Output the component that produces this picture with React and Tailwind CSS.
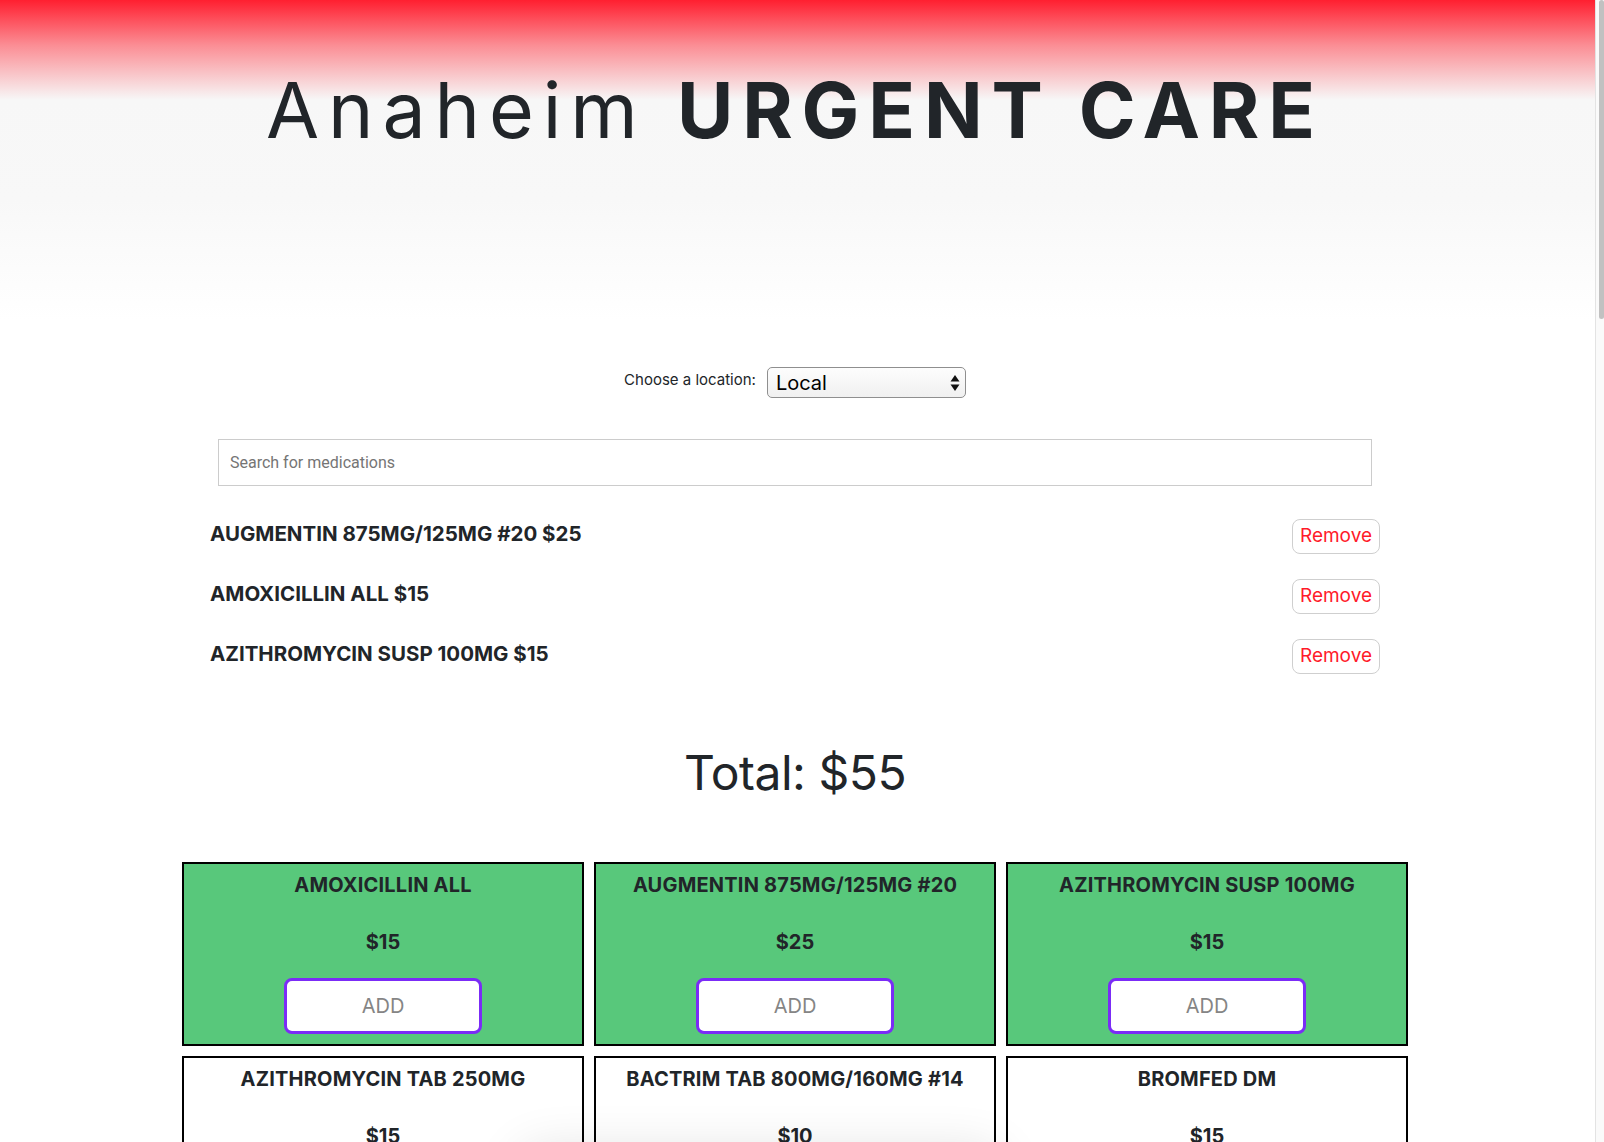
import React from "react";

const cartItems = [
  { name: "AUGMENTIN 875MG/125MG #20", price: 25 },
  { name: "AMOXICILLIN ALL", price: 15 },
  { name: "AZITHROMYCIN SUSP 100MG", price: 15 },
];

const meds = [
  { name: "AMOXICILLIN ALL", price: 15, selected: true },
  { name: "AUGMENTIN 875MG/125MG #20", price: 25, selected: true },
  { name: "AZITHROMYCIN SUSP 100MG", price: 15, selected: true },
  { name: "AZITHROMYCIN TAB 250MG", price: 15, selected: false },
  { name: "BACTRIM TAB 800MG/160MG #14", price: 10, selected: false },
  { name: "BROMFED DM", price: 15, selected: false },
];

function MedCard({ med }) {
  return (
    <div
      className={
        "h-[184px] border-2 border-black flex flex-col items-center pt-[11px] " +
        (med.selected ? "bg-[#58c87b]" : "bg-white")
      }
    >
      <div className="text-[20px] leading-none font-bold tracking-[0.01em] text-[#212529]">{med.name}</div>
      <div className="mt-[37px] text-[20px] leading-none font-bold text-[#212529]">${med.price}</div>
      <button className="mt-[26px] w-[198px] h-[56px] shrink-0 border-[3px] border-[#7b2cf6] rounded-[8px] bg-white text-[20px] text-[#858585]">
        ADD
      </button>
    </div>
  );
}

export default function App() {
  return (
    <div
      className="h-[1142px] overflow-hidden flex items-start bg-white relative text-[#212529]"
      style={{ fontFamily: "Inter, 'Noto Sans', sans-serif" }}
    >
      <div className="w-[1595px] shrink-0">
        <header className="h-[320px] pt-[72px] pr-[5px] text-center bg-[linear-gradient(to_bottom,#ff1f30_0px,#fb8d94_45px,#f7f7f7_100px,#f8f8f8_200px,#ffffff_320px)]">
          <h1 className="text-[77px] leading-none tracking-[0.115em] text-[#212529]">
            <span className="font-normal">Anaheim</span> <span className="font-bold">URGENT CARE</span>
          </h1>
        </header>

        <div className="pr-[5px]">
          <div className="mt-[47px] flex justify-center items-center gap-[11px]">
            <span className="text-[15px] text-[#212529] -mt-[4px]">Choose a location:</span>
            <div className="w-[199px] h-[31px] border border-[#8f8f8f] rounded-[5px] bg-[linear-gradient(to_bottom,#fdfdfd,#f0f0f0)] flex items-center justify-between pl-[8px] pr-[5px]">
              <span className="text-[20px] text-black leading-none">Local</span>
              <svg width="10" height="20" viewBox="0 0 10 20">
                <path d="M5 2 L9.5 8.5 L0.5 8.5 Z" fill="#111" />
                <path d="M5 18 L9.5 11.5 L0.5 11.5 Z" fill="#111" />
              </svg>
            </div>
          </div>

          <div className="mt-[41px] mx-auto w-[1154px] h-[47px] border border-[#cccccc] bg-white flex items-center px-[11px]">
            <span className="text-[16px] text-[#757575]" style={{ fontFamily: "Roboto, sans-serif" }}>
              Search for medications
            </span>
          </div>

          <div className="mt-[33px] mx-auto w-[1170px] flex flex-col gap-[25px]">
            {cartItems.map((it) => (
              <div key={it.name} className="flex justify-between items-center h-[35px]">
                <span className="text-[20.5px] font-bold leading-none -mt-[4px]">
                  {it.name} ${it.price}
                </span>
                <button className="w-[88px] h-[35px] border border-[#cfcfcf] rounded-[8px] bg-white text-[19px] text-[#ff1a2a]">
                  Remove
                </button>
              </div>
            ))}
          </div>

          <div className="mt-[75px] text-center text-[48px] leading-none font-normal tracking-[-0.01em]">Total: $55</div>

          <div className="mt-[65px] mx-auto w-[1226px] grid grid-cols-3 gap-[10px]">
            {meds.map((m) => (
              <MedCard key={m.name} med={m} />
            ))}
          </div>
        </div>
      </div>

      <div className="w-[9px] h-[1142px] shrink-0 border-l border-[#e3e3e3] bg-[#fafafa] flex justify-end">
        <div className="w-[5px] h-[319px] bg-[#c1c1c1] rounded-[3px]" />
      </div>

      <div className="absolute left-[520px] top-[1150px] w-[480px] h-[200px] rounded-[20px] bg-white shadow-[0_0_50px_rgba(0,0,0,0.12)]" />
    </div>
  );
}
